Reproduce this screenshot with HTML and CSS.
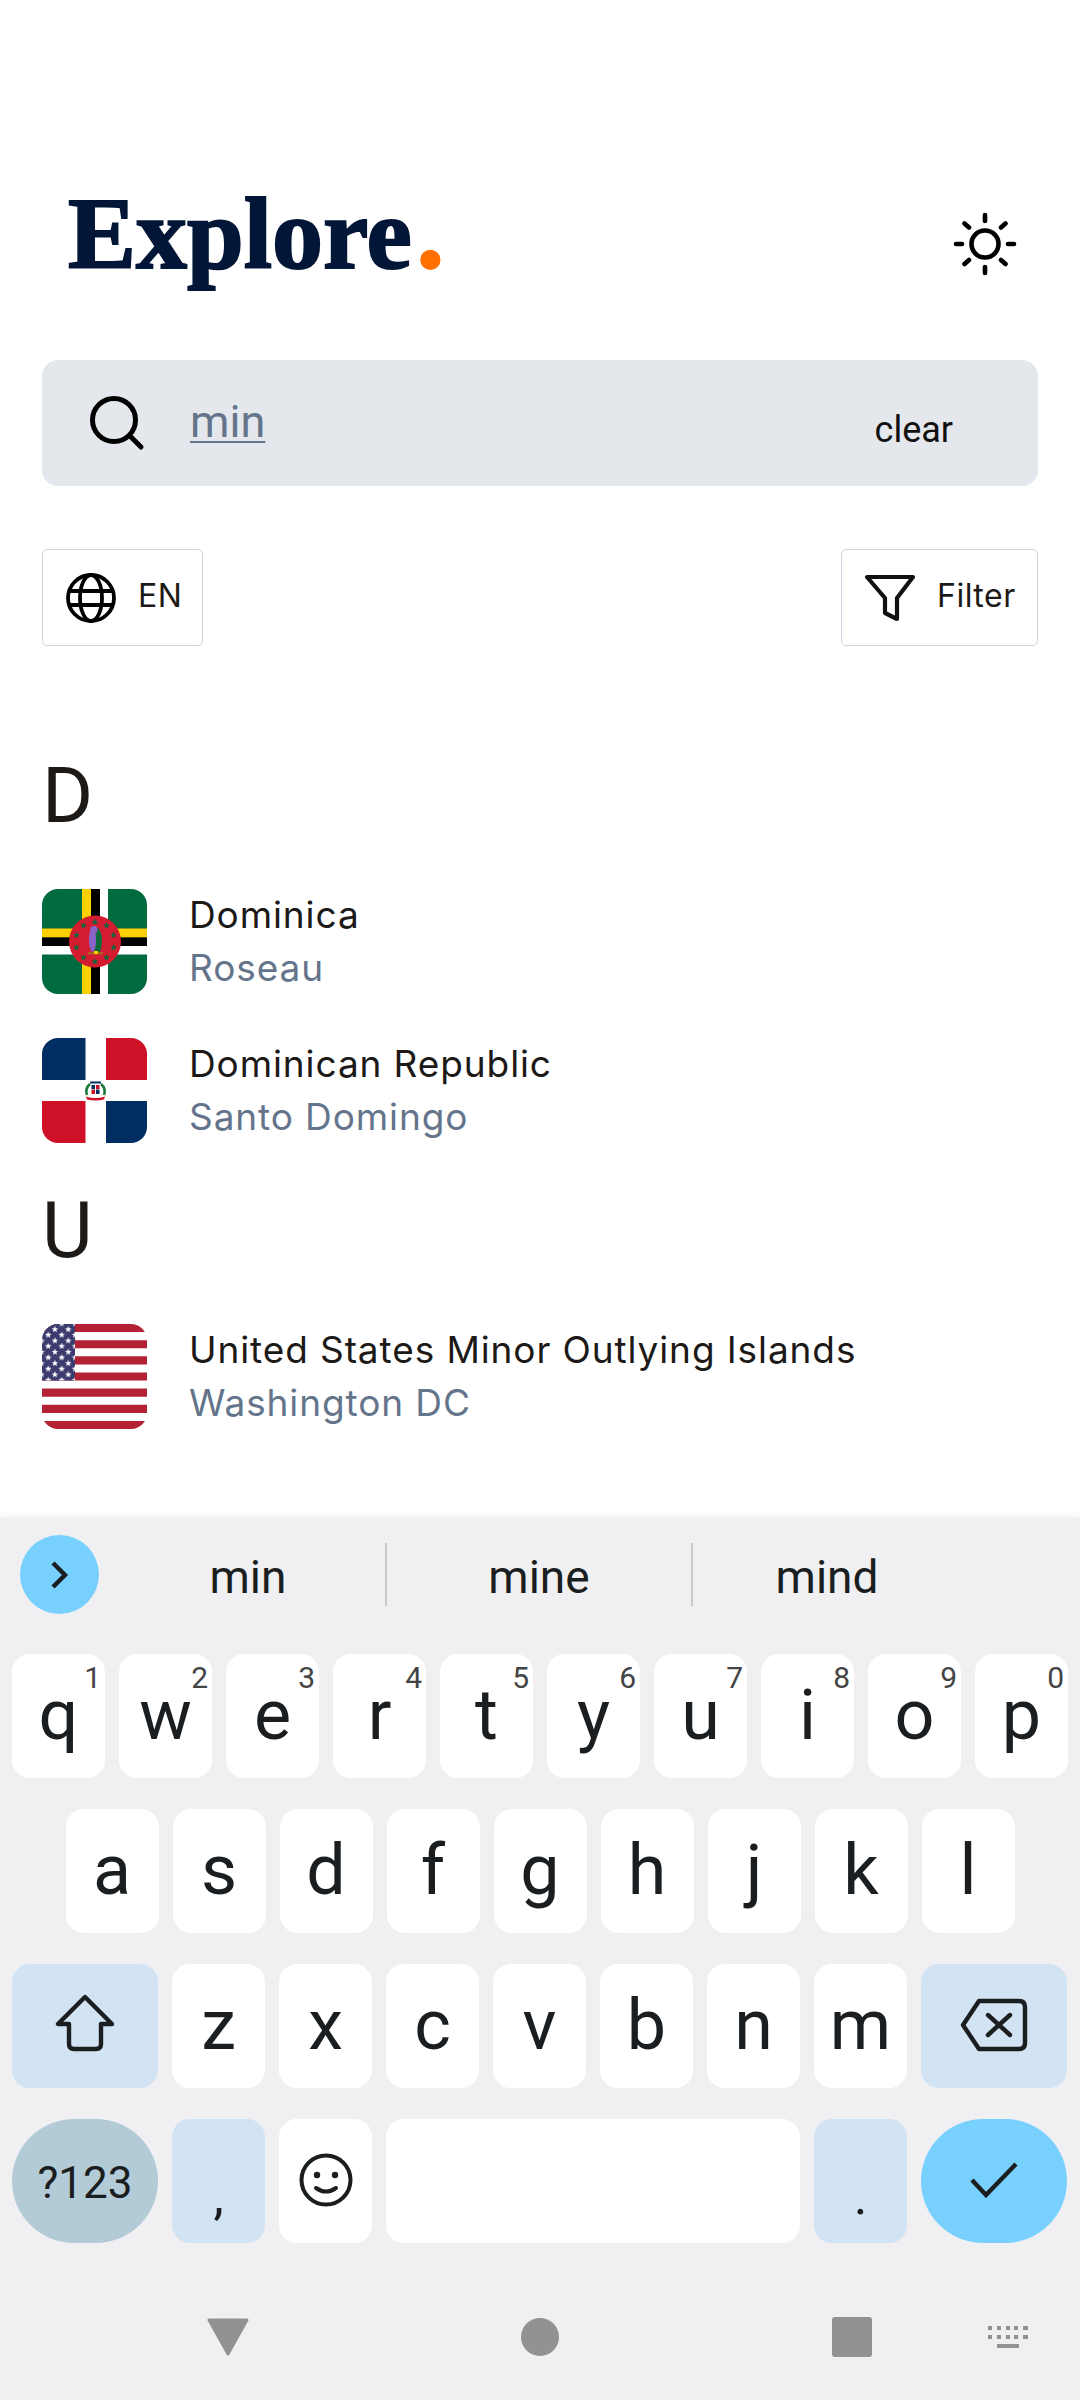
FILE: index.html
```html
<!DOCTYPE html>
<html lang="en">
<head>
    <meta charset="UTF-8">
    <meta name="viewport" content="width=device-width, initial-scale=1.0">
    <title>Explore</title>
    <link rel="stylesheet" href="styles.css">
</head>
<body>
    <svg class="defs" width="0" height="0">
        <defs>
            <polygon id="star" points="0,-3.4 .9,-1.1 3.3,-1 1.4,.5 2,2.8 0,1.5 -2,2.8 -1.4,.5 -3.3,-1 -.9,-1.1"/>
            <pattern id="usStars" width="13.4" height="11.3" patternUnits="userSpaceOnUse" x="-0.5" y="-.4">
                <use href="#star" x="13.4" y="5.7" fill="#fff"/>
                <use href="#star" x="6.8" y="11.3" fill="#fff"/>
                <use href="#star" x="6.8" y="0" fill="#fff"/>
                <use href="#star" x="0" y="5.7" fill="#fff"/>
            </pattern>
        </defs>
    </svg>

    <main class="app">
        <header class="top">
            <h1 class="logo">Explore<span class="logo-dot">.</span></h1>
            <svg class="sun" width="64" height="64" viewBox="0 0 64 64" fill="none" stroke="#000" stroke-width="4.6" stroke-linecap="round">
                <circle cx="32" cy="32" r="13.5"/>
                <path d="M32 3v6M32 55v6M3 32h6M55 32h6M11.5 11.5l4.5 4M48 48l4.5 4M52.5 11.5l-4.5 4M16 48l-4.5 4"/>
            </svg>
        </header>

        <div class="search">
            <svg class="search-icon" width="56" height="56" viewBox="0 0 56 56" fill="none" stroke="#000" stroke-width="5" stroke-linecap="round">
                <circle cx="25" cy="25" r="21.5"/>
                <path d="M41 41l11 11"/>
            </svg>
            <span class="search-text">min</span>
            <span class="search-clear">clear</span>
        </div>

        <div class="tools">
            <div class="tool tool-lang">
                <svg width="52" height="52" viewBox="0 0 52 52" fill="none" stroke="#000" stroke-width="3.8">
                    <circle cx="26" cy="26" r="23"/>
                    <ellipse cx="26" cy="26" rx="11" ry="23"/>
                    <path d="M4 19h44M4 33h44"/>
                </svg>
                <span>EN</span>
            </div>
            <div class="tool tool-filter">
                <svg width="52" height="48" viewBox="0 0 52 48" fill="none" stroke="#111" stroke-width="4.2" stroke-linejoin="round">
                    <path d="M3 3H49L33 24V45L21 39V24Z"/>
                </svg>
                <span>Filter</span>
            </div>
        </div>

        <section class="group">
            <h2 class="letter">D</h2>
            <div class="country">
                <svg class="flag" viewBox="0 0 105 105">
                    <rect width="105" height="105" fill="#006b3f"/>
                    <rect x="40" width="9" height="105" fill="#fccf00"/>
                    <rect x="49" width="9" height="105" fill="#000"/>
                    <rect x="58" width="8" height="105" fill="#fff"/>
                    <rect y="39.500" width="105" height="9" fill="#fccf00"/>
                    <rect y="48.500" width="105" height="8.500" fill="#000"/>
                    <rect y="57" width="105" height="8.500" fill="#fff"/>
                    <circle cx="53" cy="52.500" r="26" fill="#d41c30"/>
                    <g fill="#006b3f">
                        <use href="#star" x="53" y="33"/>
                        <use href="#star" x="41.500" y="36.500"/>
                        <use href="#star" x="64.500" y="36.500"/>
                        <use href="#star" x="34.500" y="46"/>
                        <use href="#star" x="71.500" y="46"/>
                        <use href="#star" x="34.500" y="58.500"/>
                        <use href="#star" x="71.500" y="58.500"/>
                        <use href="#star" x="41.500" y="68.500"/>
                        <use href="#star" x="64.500" y="68.500"/>
                        <use href="#star" x="53" y="72.500"/>
                    </g>
                    <ellipse cx="55" cy="52" rx="5" ry="13" fill="#0f6b3a"/>
                    <ellipse cx="50.500" cy="51" rx="3.600" ry="12" fill="#8a63c9"/>
                    <circle cx="52" cy="40.500" r="3.600" fill="#8a63c9"/>
                    <rect x="46" y="63" width="15" height="2.400" fill="#a5651c"/>
                    <rect x="52" y="62" width="4" height="3" fill="#fccf00"/>
                </svg>
                <div class="country-text">
                    <div class="country-name">Dominica</div>
                    <div class="country-capital">Roseau</div>
                </div>
            </div>
            <div class="country">
                <svg class="flag" viewBox="0 0 105 105">
                    <rect width="105" height="105" fill="#fff"/>
                    <rect width="43.500" height="42" fill="#002d62"/>
                    <rect x="64" width="41" height="42" fill="#ce1126"/>
                    <rect y="63" width="43.500" height="42" fill="#ce1126"/>
                    <rect x="64" y="63" width="41" height="42" fill="#002d62"/>
                    <path d="M45 57a10 10 0 0 1 3-11" fill="none" stroke="#1f7a3a" stroke-width="2.600"/>
                    <path d="M62 57a10 10 0 0 0-3-11" fill="none" stroke="#1f7a3a" stroke-width="2.600"/>
                    <path d="M48 43.500h11v2H48z" fill="#002d62"/>
                    <rect x="49.500" y="47" width="3.500" height="4" fill="#002d62"/>
                    <rect x="54" y="47" width="3.500" height="4" fill="#ce1126"/>
                    <rect x="49.500" y="51.500" width="3.500" height="4.500" fill="#ce1126"/>
                    <rect x="54" y="51.500" width="3.500" height="4.500" fill="#002d62"/>
                    <path d="M44 58.500q9 3 19 0l-1 3q-8 2-17 0z" fill="#ce1126"/>
                </svg>
                <div class="country-text">
                    <div class="country-name">Dominican Republic</div>
                    <div class="country-capital">Santo Domingo</div>
                </div>
            </div>
        </section>

        <section class="group">
            <h2 class="letter">U</h2>
            <div class="country">
                <svg class="flag" viewBox="0 0 105 105">
                    <rect width="105" height="105" fill="#fff"/>
                    <path d="M0 0h105v8.100H0zM0 16.200h105v8.100H0zM0 32.300h105v8.100H0zM0 48.500h105v8.100H0zM0 64.600h105v8.100H0zM0 80.800h105v8.100H0zM0 96.900h105V105H0z" fill="#b22234"/>
                    <rect width="33" height="56.500" fill="#3c3b6e"/>
                    <rect width="33" height="56.500" fill="url(#usStars)"/>
                </svg>
                <div class="country-text">
                    <div class="country-name">United States Minor Outlying Islands</div>
                    <div class="country-capital">Washington DC</div>
                </div>
            </div>
        </section>
    </main>

    <div class="keyboard">
        <div class="suggest">
            <div class="suggest-btn">
                <svg width="24" height="30" viewBox="0 0 24 30" fill="none" stroke="#1b1e20" stroke-width="4.400">
                    <path d="M5 3l12 12L5 27"/>
                </svg>
            </div>
            <div class="suggest-word suggest-first">min</div>
            <div class="suggest-word">mine</div>
            <div class="suggest-word suggest-last">mind</div>
        </div>

        <div class="key-row">
            <div class="key">q<span class="hint">1</span></div>
            <div class="key">w<span class="hint">2</span></div>
            <div class="key">e<span class="hint">3</span></div>
            <div class="key">r<span class="hint">4</span></div>
            <div class="key">t<span class="hint">5</span></div>
            <div class="key">y<span class="hint">6</span></div>
            <div class="key">u<span class="hint">7</span></div>
            <div class="key">i<span class="hint">8</span></div>
            <div class="key">o<span class="hint">9</span></div>
            <div class="key">p<span class="hint">0</span></div>
        </div>
        <div class="key-row key-row-home">
            <div class="key">a</div>
            <div class="key">s</div>
            <div class="key">d</div>
            <div class="key">f</div>
            <div class="key">g</div>
            <div class="key">h</div>
            <div class="key">j</div>
            <div class="key">k</div>
            <div class="key">l</div>
        </div>
        <div class="key-row">
            <div class="key key-wide key-func">
                <svg class="shift-icon" width="60" height="58" viewBox="0 0 60 58" fill="none" stroke="#1b1e20" stroke-width="4.400" stroke-linejoin="round">
                    <path d="M30 3L3 30H14V50Q14 55 19 55H41Q46 55 46 50V30H57Z"/>
                </svg>
            </div>
            <div class="key">z</div>
            <div class="key">x</div>
            <div class="key">c</div>
            <div class="key">v</div>
            <div class="key">b</div>
            <div class="key">n</div>
            <div class="key">m</div>
            <div class="key key-wide key-func">
                <svg class="back-icon" width="68" height="54" viewBox="0 0 68 54" fill="none" stroke="#1b1e20" stroke-width="4.400" stroke-linejoin="round" stroke-linecap="round">
                    <path d="M19 3H59Q65 3 65 9V45Q65 51 59 51H19L3 27Z"/>
                    <path d="M28 17L50 37M50 17L28 37"/>
                </svg>
            </div>
        </div>
        <div class="key-row">
            <div class="key key-wide key-round key-sym">?123</div>
            <div class="key key-func key-punct">,</div>
            <div class="key">
                <svg width="54" height="54" viewBox="0 0 54 54" fill="none" stroke="#1b1e20" stroke-width="4" stroke-linecap="round">
                    <circle cx="27" cy="27" r="24.500"/>
                    <circle cx="18" cy="22" r="3.200" fill="#1b1e20" stroke="none"/>
                    <circle cx="36" cy="22" r="3.200" fill="#1b1e20" stroke="none"/>
                    <path d="M17 35Q27 42 37 35"/>
                </svg>
            </div>
            <div class="key key-space"></div>
            <div class="key key-func key-punct">.</div>
            <div class="key key-wide key-round key-enter">
                <svg width="48" height="36" viewBox="0 0 48 36" fill="none" stroke="#1b1e20" stroke-width="4.400">
                    <path d="M2 18L16 33L46 2"/>
                </svg>
            </div>
        </div>

        <div class="nav">
            <div class="nav-item">
                <svg width="42" height="38" viewBox="0 0 42 38" fill="#929292" stroke="#929292" stroke-width="3" stroke-linejoin="round">
                    <path d="M2 2H40L21 36Z"/>
                </svg>
            </div>
            <div class="nav-item"><div class="nav-home"></div></div>
            <div class="nav-item"><div class="nav-recent"></div></div>
            <svg class="nav-kbd" width="40" height="22" viewBox="0 0 40 22" fill="#929292">
                <path d="M0 0h4v4H0zM9 0h4v4H9zM18 0h4v4h-4zM26 0h4v4h-4zM35 0h5v4h-5zM0 9h4v4H0zM9 9h4v4H9zM18 9h4v4h-4zM26 9h4v4h-4zM35 9h5v4h-5zM9 18h22v4H9z"/>
            </svg>
        </div>
    </div>
</body>
</html>
```

FILE: styles.css
```css
* {
    box-sizing: border-box;
}
body {
    margin: 0;
    width: 1080px;
    height: 2400px;
    display: flex;
    flex-direction: column;
    background-color: #fff;
    color: #1c1917;
    font-family: Inter, sans-serif;
    overflow: hidden;
}
.defs {
    display: block;
}
.app {
    flex: 1;
    padding: 0 42px;
}
.top {
    display: flex;
    justify-content: space-between;
    align-items: flex-start;
    height: 360px;
    padding-top: 176px;
}
.logo {
    margin: 0 0 0 26px;
    font-family: "Liberation Serif", serif;
    font-size: 102px;
    line-height: 115px;
    font-weight: 700;
    color: #021737;
    -webkit-text-stroke: 2px #021737;
    white-space: nowrap;
}
.logo-dot {
    font-size: 125px;
    line-height: 1px;
    margin-left: 3px;
    color: #ff7000;
    -webkit-text-stroke: 0;
}
.sun {
    margin: 36px 21px 0 0;
}
.search {
    display: flex;
    align-items: center;
    height: 126px;
    padding: 0 85px 0 47px;
    background-color: #e4e7ec;
    border-radius: 16px;
}
.search-text {
    margin-left: 45px;
    margin-top: -4px;
    font-family: Roboto, sans-serif;
    font-size: 45px;
    color: #64748b;
    text-decoration: underline;
    text-decoration-thickness: 2px;
    text-underline-offset: 4px;
}
.search-clear {
    margin-left: auto;
    margin-top: 14px;
    font-family: Roboto, sans-serif;
    font-size: 36px;
    color: #111;
}
.tools {
    display: flex;
    justify-content: space-between;
    margin-top: 63px;
}
.tool {
    display: flex;
    align-items: center;
    height: 97px;
    border: 1px solid #cbd5e1;
    border-radius: 5px;
    font-size: 32px;
    letter-spacing: 0.5px;
}
.tool span {
    margin-top: -5px;
}
.tool-lang {
    width: 161px;
    padding-left: 22px;
    gap: 21px;
}
.tool-filter {
    width: 197px;
    padding-left: 22px;
    gap: 21px;
}
.group {
    display: flex;
    flex-direction: column;
}
.letter {
    margin: 0;
    font-family: Roboto, sans-serif;
    font-size: 78px;
    font-weight: 400;
    line-height: 96px;
    color: #1c1917;
}
.tools + .group {
    margin-top: 102px;
}
.group + .group {
    margin-top: 40px;
}
.country {
    display: flex;
    align-items: center;
    gap: 42px;
    margin-top: 43px;
}
.group .letter + .country {
    margin-top: 44px;
}
.flag {
    width: 105px;
    height: 105px;
    border-radius: 16px;
    flex: none;
}
.country-name,
.country-capital {
    font-size: 37px;
    line-height: 53px;
    letter-spacing: 0.9px;
}
.country-capital {
    color: #64748b;
}
.keyboard {
    height: 883px;
    background-color: #f0f0f3;
    box-shadow: 0 -3px 6px rgba(0, 0, 0, 0.04);
}
.suggest {
    display: flex;
    align-items: center;
    height: 137px;
    padding: 18px 0 40px 20px;
}
.suggest-btn {
    flex: none;
    width: 79px;
    height: 79px;
    border-radius: 50%;
    display: flex;
    align-items: center;
    justify-content: center;
    background-color: #78d0ff;
}
.suggest-word {
    width: 306px;
    height: 63px;
    padding-top: 5px;
    display: flex;
    align-items: center;
    justify-content: center;
    font-family: Roboto, sans-serif;
    font-size: 46px;
    color: #1b1e20;
    border-left: 2px solid #c8c8ca;
}
.suggest-first {
    width: 274px;
    margin-left: 12px;
    border-left: none;
}
.suggest-last {
    width: 270px;
}
.key-row {
    display: flex;
    gap: 14px;
    padding: 0 12px;
    margin-bottom: 31px;
}
.key-row-home {
    padding-left: 65.5px;
}
.key {
    position: relative;
    flex: none;
    width: 93px;
    height: 124px;
    padding-bottom: 3px;
    display: flex;
    align-items: center;
    justify-content: center;
    background-color: #fff;
    border-radius: 18px;
    font-family: Roboto, sans-serif;
    font-size: 70px;
    color: #1b1e20;
}
.key-wide {
    width: 146px;
}
.key-func {
    background-color: #d2e4f4;
}
.key-round {
    border-radius: 62px;
}
.key-sym {
    padding: 4px 0 0;
    background-color: #b3cad7;
    font-size: 44px;
}
.key-enter {
    background-color: #78d0ff;
}
.key-space {
    width: 414px;
}
.key-punct {
    align-items: flex-end;
    padding-bottom: 16px;
    font-size: 52px;
    line-height: 60px;
}
.shift-icon {
    margin-top: -3px;
}
.back-icon {
    margin-top: 1px;
}
.hint {
    position: absolute;
    top: 4px;
    right: 4px;
    font-size: 30px;
    line-height: 40px;
    color: #444;
}
.nav {
    display: grid;
    grid-template-columns: 312px 312px 312px 40px;
    align-items: center;
    height: 40px;
    margin-top: 74px;
    padding-left: 72px;
}
.nav-item {
    display: flex;
    justify-content: center;
}
.nav-home {
    width: 38px;
    height: 38px;
    border-radius: 50%;
    background-color: #929292;
}
.nav-recent {
    width: 40px;
    height: 40px;
    border-radius: 3px;
    background-color: #929292;
}
.nav-kbd {
    margin-left: -20px;
}
```
